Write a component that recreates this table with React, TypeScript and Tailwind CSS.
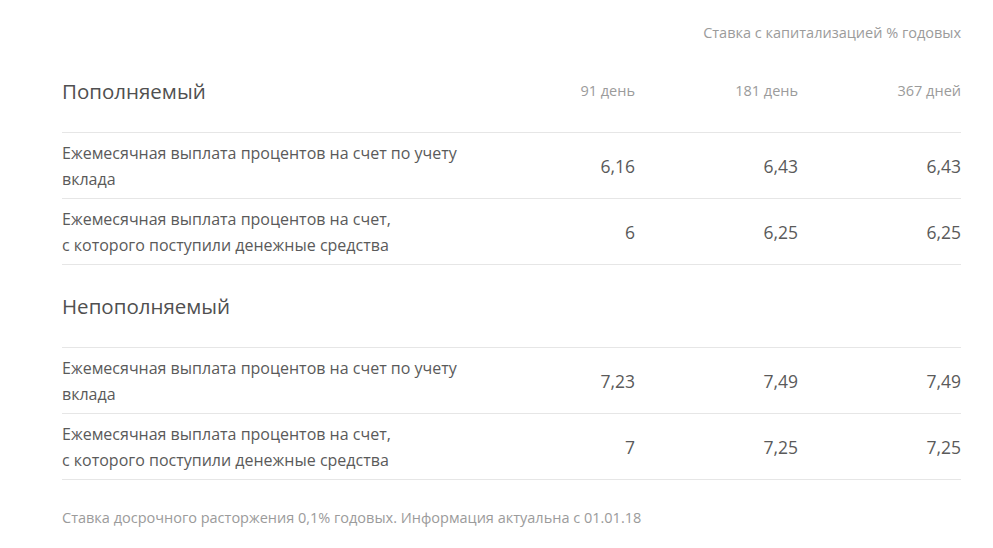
const FONT = "font-['Open_Sans','Noto_Sans',sans-serif]";

type Row = { label: [string, string]; values: [string, string, string] };

const sections: { title: string; rows: Row[] }[] = [
  {
    title: 'Пополняемый',
    rows: [
      {
        label: ['Ежемесячная выплата процентов на счет по учету', 'вклада'],
        values: ['6,16', '6,43', '6,43'],
      },
      {
        label: ['Ежемесячная выплата процентов на счет,', 'с которого поступили денежные средства'],
        values: ['6', '6,25', '6,25'],
      },
    ],
  },
  {
    title: 'Непополняемый',
    rows: [
      {
        label: ['Ежемесячная выплата процентов на счет по учету', 'вклада'],
        values: ['7,23', '7,49', '7,49'],
      },
      {
        label: ['Ежемесячная выплата процентов на счет,', 'с которого поступили денежные средства'],
        values: ['7', '7,25', '7,25'],
      },
    ],
  },
];

const days = ['91 день', '181 день', '367 дней'];

export default function App() {
  return (
    <div className={`w-[993px] h-[548px] bg-white ${FONT}`}>
      <div className="ml-[62px] w-[899px] pt-[23px]">
        <div className="flex justify-end text-[14.5px] leading-[20px] text-[#9b9b9b]">
          Ставка с капитализацией % годовых
        </div>

        {sections.map((section, si) => (
          <div key={section.title}>
            <div
              className={`grid grid-cols-[410px_163px_163px_163px] items-start ${
                si === 0 ? 'pt-[37px] h-[89px]' : 'pt-[30px] h-[82px]'
              }`}
            >
              <div className="text-[20.5px] leading-[22px] text-[#505050]">{section.title}</div>
              {si === 0 &&
                days.map((d) => (
                  <div key={d} className="text-right text-[14.5px] leading-[22px] text-[#9b9b9b]">
                    {d}
                  </div>
                ))}
            </div>
            <div className="border-b border-[#e6e6e6]">
              {section.rows.map((row, ri) => (
                <div
                  key={ri}
                  className="grid grid-cols-[410px_163px_163px_163px] items-center h-[66px] border-t border-[#e6e6e6] pt-[1px]"
                >
                  <div className="text-[16px] leading-[26px] text-[#5a5a5a]">
                    {row.label[0]}
                    <br />
                    {row.label[1]}
                  </div>
                  {row.values.map((v, vi) => (
                    <div key={vi} className="text-right text-[17.5px] leading-[22px] text-[#5a5a5a]">
                      {v}
                    </div>
                  ))}
                </div>
              ))}
            </div>
          </div>
        ))}

        <div className="pt-[28px] text-[14.5px] leading-[20px] text-[#9b9b9b]">
          Ставка досрочного расторжения 0,1% годовых. Информация актуальна с 01.01.18
        </div>
      </div>
    </div>
  );
}
